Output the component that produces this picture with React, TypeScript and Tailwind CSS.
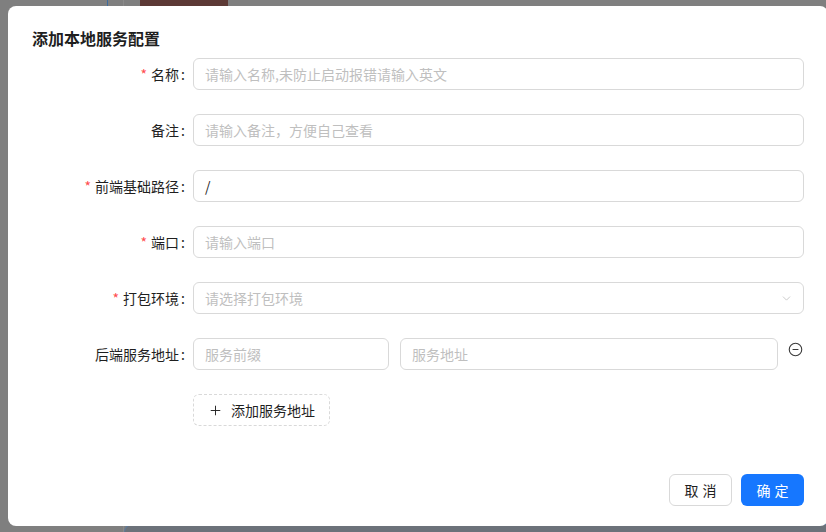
import { Plus, ChevronDown, MinusCircle } from "lucide-react";

const FONT = { fontFamily: '"Noto Sans CJK SC", "Noto Sans", sans-serif' };

function Label({ text, required }: { text: string; required?: boolean }) {
  return (
    <div className="w-[161px] shrink-0 flex items-center justify-end h-8 text-sm text-[#1f1f1f]">
      {required && <span className="text-[#ff4d4f] mr-1 text-sm">*</span>}
      <span>{text}</span>
      <span className="ml-[2px] mr-2">:</span>
    </div>
  );
}

function Input({ placeholder, value, className = "" }: { placeholder?: string; value?: string; className?: string }) {
  return (
    <div
      className={`h-8 rounded-md border border-[#d9d9d9] bg-white px-[11px] flex items-center text-sm ${className}`}
    >
      {value ? (
        <span className="text-[#1f1f1f]">{value}</span>
      ) : (
        <span className="text-[#bfbfbf]">{placeholder}</span>
      )}
    </div>
  );
}

function Row({ label, required, children }: { label: string; required?: boolean; children: React.ReactNode }) {
  return (
    <div className="flex mb-6">
      <Label text={label} required={required} />
      <div className="flex-1 flex items-center">{children}</div>
    </div>
  );
}

export default function App() {
  return (
    <div className="relative w-[826px] h-[532px] overflow-hidden bg-[#7f7f7f] flex" style={FONT}>
      {/* page behind the mask */}
      <div className="w-[124px] shrink-0 border-r border-[#8a8a8a] relative">
        <div className="ml-[107px] w-px h-[6px] bg-[#3e6c9e]" />
      </div>
      <div className="flex-1 flex flex-col">
        <div className="ml-[16px] w-[88px] h-[6px] bg-[#5c3935]" />
        <div className="flex-1" />
        <div className="h-[8px] rounded-tl-lg bg-[#6c727a] border-l border-t border-[#5f7a9a]" />
      </div>

      {/* modal */}
      <div className="absolute left-[8px] top-[6px] w-[820px] h-[520px] bg-white rounded-lg px-6 pt-5 pb-5 flex flex-col">
        <div className="text-base font-semibold leading-6 text-[#1f1f1f] mb-2">添加本地服务配置</div>

        <Row label="名称" required>
          <Input className="flex-1" placeholder="请输入名称,未防止启动报错请输入英文" />
        </Row>
        <Row label="备注">
          <Input className="flex-1" placeholder="请输入备注，方便自己查看" />
        </Row>
        <Row label="前端基础路径" required>
          <Input className="flex-1" value="/" />
        </Row>
        <Row label="端口" required>
          <Input className="flex-1" placeholder="请输入端口" />
        </Row>
        <Row label="打包环境" required>
          <div className="flex-1 h-8 rounded-md border border-[#d9d9d9] bg-white pl-[11px] pr-[10px] flex items-center justify-between text-sm">
            <span className="text-[#bfbfbf]">请选择打包环境</span>
            <ChevronDown size={13} strokeWidth={1.5} className="text-[#bfbfbf]" />
          </div>
        </Row>
        <Row label="后端服务地址">
          <Input className="w-[196px] shrink-0" placeholder="服务前缀" />
          <Input className="flex-1 ml-[11px]" placeholder="服务地址" />
          <MinusCircle size={15} strokeWidth={1.75} className="ml-[10px] mr-[1px] -mt-[9px] text-[#3a3a3a]" />
        </Row>

        <div className="flex">
          <div className="w-[161px] shrink-0" />
          <div className="h-8 w-[137px] rounded-md border border-dashed border-[#d9d9d9] flex items-center justify-center gap-2 text-sm text-[#1f1f1f]">
            <Plus size={15} strokeWidth={1.5} />
            <span>添加服务地址</span>
          </div>
        </div>

        <div className="mt-auto flex justify-end gap-[9px]">
          <div className="h-8 w-[63px] rounded-md border border-[#d9d9d9] flex items-center justify-center text-sm text-[#1f1f1f] tracking-[0.3em] pl-[0.3em]">
            取消
          </div>
          <div className="h-8 w-[63px] rounded-md bg-[#1677ff] flex items-center justify-center text-sm text-white tracking-[0.3em] pl-[0.3em]">
            确定
          </div>
        </div>
      </div>
    </div>
  );
}
